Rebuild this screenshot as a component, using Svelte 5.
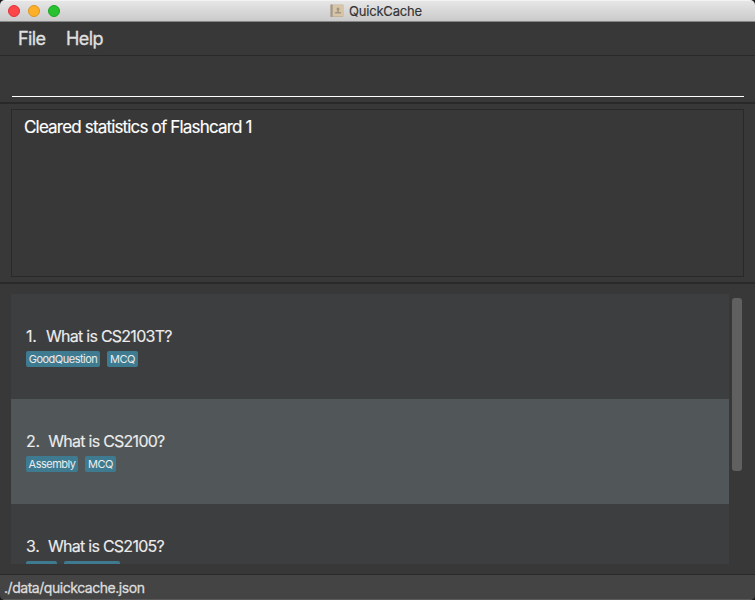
<script>
  const cards = [
    { id: 1, question: 'What is CS2103T?', tags: [{ name: 'GoodQuestion', width: 74 }, { name: 'MCQ', width: 31 }] },
    { id: 2, question: 'What is CS2100?', tags: [{ name: 'Assembly', width: 52 }, { name: 'MCQ', width: 31 }], selected: true },
    { id: 3, question: 'What is CS2105?', tags: [{ name: '', width: 31 }, { name: '', width: 56 }] }
  ];
</script>

<div class="desktop">
  <main class="window">
    <header class="titlebar">
      <div class="lights"><i class="red"></i><i class="amber"></i><i class="green"></i></div>
      <div class="title">
        <svg width="14" height="14" viewBox="0 0 14 14">
          <rect x="0.5" y="0.5" width="13" height="12.5" rx="0.8" fill="#c3b39b" />
          <rect x="3" y="1" width="10" height="11" fill="#d8c5a6" />
          <rect x="0.5" y="0.5" width="2" height="12.5" fill="#a19a93" />
          <circle cx="8" cy="5" r="1.5" fill="#a09584" />
          <path d="M7.3 6h1.4v1.700l2.4.6v1.200H4.9V8.300l2.400-.6z" fill="#a09584" />
        </svg>
        <span>QuickCache</span>
      </div>
    </header>
    <nav><span class="file">File</span><span>Help</span></nav>
    <section class="command"><div class="field"></div></section>
    <section class="result"><div class="box"><span>Cleared statistics of Flashcard 1</span></div></section>
    <section class="content">
      <div class="list">
        {#each cards as card}
          <article class:selected={card.selected}>
            <div class="question"><span class="num">{card.id}.</span><span class="q">{card.question}</span></div>
            <div class="tags">
              {#each card.tags as tag}
                <span class="tag" style:width="{tag.width}px">{tag.name}</span>
              {/each}
            </div>
          </article>
        {/each}
      </div>
      <div class="scroll"><div class="thumb"></div></div>
    </section>
    <footer><span>./data/quickcache.json</span></footer>
  </main>
</div>

<style>
  :global(body) { margin: 0; background: #1c1c1c; }
  .desktop { width: 755px; height: 600px; background: #1c1c1c; }
  .window {
    box-sizing: border-box; width: 755px; height: 600px; display: flex; flex-direction: column;
    overflow: hidden; border-radius: 5px; background: #383838; color: #ececec;
    font-family: Inter, "Liberation Sans", sans-serif; white-space: nowrap;
  }
  .titlebar {
    box-sizing: border-box; height: 22px; flex: none; display: flex; align-items: center;
    background: linear-gradient(#e6e6e6, #cacaca);
    border-top: 1px solid #f3f3f3; border-bottom: 1px solid #858585;
  }
  .lights { display: flex; gap: 8px; padding-left: 8px; width: 200px; }
  .lights i { box-sizing: border-box; width: 12px; height: 12px; border-radius: 50%; border: 1px solid; }
  .lights .red { background: #fc464a; border-color: #df3439; }
  .lights .amber { background: #fdaf27; border-color: #dc9522; }
  .lights .green { background: #28c231; border-color: #1ca428; }
  .title {
    display: flex; align-items: center; padding-left: 122px; gap: 5px;
    font-size: 13px; line-height: 20px; color: #333; letter-spacing: -0.2px;
    -webkit-text-stroke: 0.15px currentColor;
  }
  nav {
    height: 33px; flex: none; border-bottom: 1px solid #292929; padding-left: 18px;
    display: flex; font-size: 18px; line-height: 33px; letter-spacing: -0.6px; color: #e0e0e0;
    -webkit-text-stroke: 0.3px currentColor;
  }
  nav .file { width: 48px; }
  .command { box-sizing: border-box; height: 48px; flex: none; padding: 0 11px 0 12px; border-bottom: 2px solid #292929; }
  .field { height: 40px; border-bottom: 1px solid #fff; }
  .result { box-sizing: border-box; height: 180px; flex: none; padding: 5px 11px; border-bottom: 2px solid #292929; }
  .box {
    box-sizing: border-box; height: 168px; border: 1px solid #292929; padding: 7px 12px;
    font-size: 17px; line-height: 20px; letter-spacing: -0.83px; color: #fff;
    -webkit-text-stroke: 0.15px currentColor;
  }
  .content { box-sizing: border-box; height: 290px; flex: none; display: flex; padding: 10px 11px; }
  .list { width: 718px; height: 270px; overflow: hidden; background: #3c3e3f; }
  article { box-sizing: border-box; height: 105px; padding: 32px 15px 0; }
  .selected { background: #515658; }
  .question {
    display: flex; gap: 9.5px; height: 21px; font-size: 16px; line-height: 21px;
    -webkit-text-stroke: 0.15px currentColor;
  }
  .num { letter-spacing: -0.3px; }
  .num + .q { letter-spacing: -0.74px; }
  article:not(:first-child) .question { gap: 8.500px; }
  .tags { display: flex; gap: 7px; padding-top: 4px; }
  .tag {
    height: 16px; line-height: 16px; border-radius: 2px; background: #3e7b91;
    text-align: center; font-size: 11px; letter-spacing: -0.5px;
  }
  .scroll { width: 15px; padding: 4px 0 0 3px; box-sizing: border-box; }
  .thumb { width: 10px; height: 173px; border-radius: 3px; background: #606060; }
  footer {
    box-sizing: border-box; height: 26px; flex: none; border-top: 1px solid #292929;
    border-bottom: 1px solid #5a5a5a; background: #444; padding-left: 4px;
    font-size: 14px; line-height: 26px; letter-spacing: -0.46px; color: #ddd;
    -webkit-text-stroke: 0.3px currentColor;
  }
</style>
